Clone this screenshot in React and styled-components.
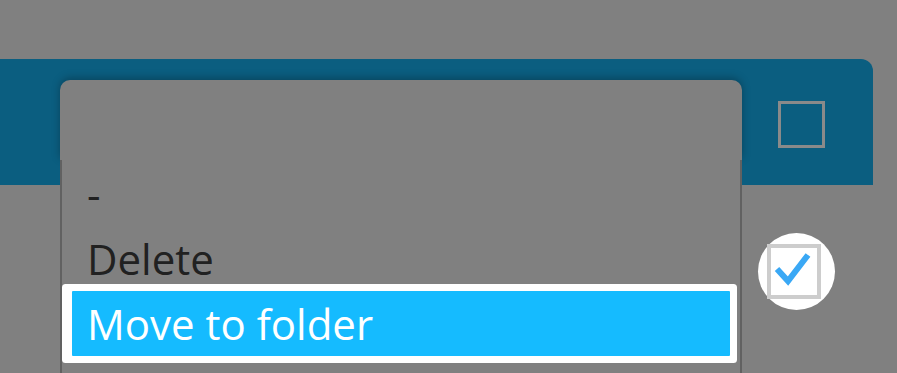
import React from "react";
import styled, { createGlobalStyle } from "styled-components";

const Global = createGlobalStyle`
  html, body { margin: 0; padding: 0; background: #808080; }
  body { font-family: "Open Sans", "Noto Sans", sans-serif; overflow: hidden; }
`;

const Page = styled.div`
  position: relative;
  width: 897px;
  height: 373px;
  padding: 59px 24px 0 0;
  box-sizing: border-box;
  overflow: hidden;
`;

const Header = styled.div`
  height: 126px;
  background: #0b5e80;
  border-top-right-radius: 12px;
  display: flex;
  align-items: center;
  justify-content: flex-end;
  padding: 5px 48px 0 0;
  box-sizing: border-box;
`;

const HeaderBox = styled.div`
  width: 47px;
  height: 47px;
  box-sizing: border-box;
  border: 3px solid #8a8a8a;
`;

const Row = styled.div`
  display: flex;
  justify-content: flex-end;
  padding: 48px 38px 0 0;
`;

const Spot = styled.div`
  width: 77px;
  height: 77px;
  border-radius: 50%;
  background: #fff;
  display: flex;
  align-items: center;
  justify-content: center;
`;

const CheckBox = styled.div`
  width: 54px;
  height: 55px;
  box-sizing: border-box;
  border: 4px solid #cdcdcd;
  background: #fff;
  display: flex;
  align-items: center;
  justify-content: center;
  margin-left: -6px;
`;

const Menu = styled.div`
  position: absolute;
  left: 60px;
  top: 80px;
  width: 682px;
  display: flex;
  flex-direction: column;
`;

const MenuTop = styled.div`
  height: 80px;
  background: #808080;
  border-radius: 10px 10px 0 0;
  box-shadow: 0 -2px 8px rgba(0, 0, 0, 0.28);
`;

const MenuList = styled.div`
  border-left: 2px solid #616161;
  border-right: 2px solid #616161;
  background: #808080;
  padding: 1px 10px 40px;
  display: flex;
  flex-direction: column;
`;

const Item = styled.div`
  height: 65px;
  line-height: 65px;
  font-size: 42px;
  padding: 0 15px;
  color: ${(p) => (p.$active ? "#ffffff" : "#212121")};
  background: ${(p) => (p.$active ? "#15bbff" : "transparent")};
  box-shadow: ${(p) =>
    p.$active ? "0 0 0 7px #ffffff, -3px 0 0 7px #ffffff" : "none"};
  border-radius: ${(p) => (p.$active ? "1px" : "0")};
  white-space: nowrap;
`;

export default function App() {
  return (
    <>
      <Global />
      <Page>
        <Header>
          <HeaderBox />
        </Header>
        <Row>
          <Spot>
            <CheckBox>
              <svg width="46" height="47" viewBox="0 0 46 47">
                <path
                  d="M6 21 L17 33 L37 7"
                  fill="none"
                  stroke="#3aa8f5"
                  strokeWidth="6"
                />
              </svg>
            </CheckBox>
          </Spot>
        </Row>
        <Menu>
          <MenuTop />
          <MenuList>
            <Item>-</Item>
            <Item>Delete</Item>
            <Item $active>Move to folder</Item>
          </MenuList>
        </Menu>
      </Page>
    </>
  );
}
